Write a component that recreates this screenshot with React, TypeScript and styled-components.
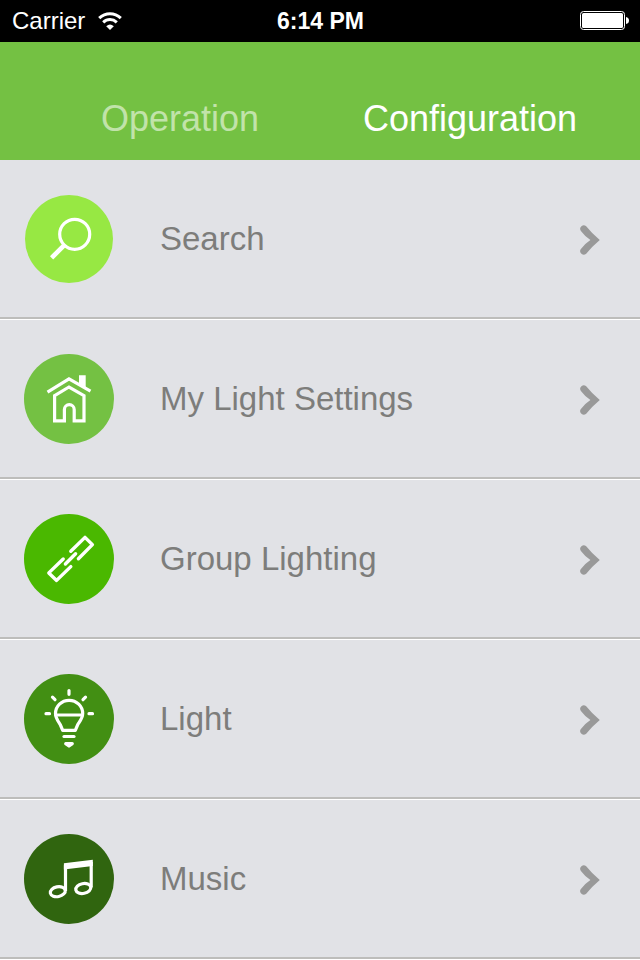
import React from "react";
import styled, { createGlobalStyle } from "styled-components";

const GlobalStyle = createGlobalStyle`
  * { box-sizing: border-box; }
  body {
    margin: 0;
    background: #e1e2e6;
    font-family: "Liberation Sans", Arial, Helvetica, sans-serif;
  }
`;

const StatusBar = styled.header`
  display: grid;
  grid-template-columns: 1fr auto 1fr;
  align-items: center;
  height: 42px;
  padding: 0 11px 1px 12px;
  background: #000;
  color: #fff;
  font-size: 24px;
  line-height: 28px;
`;

const Carrier = styled.div`
  display: flex;
  align-items: center;
  gap: 13px;
`;

const Clock = styled.time`
  font-size: 23px;
  font-weight: bold;
`;

const BatteryIcon = styled.svg`
  justify-self: end;
`;

const TabBar = styled.nav`
  display: grid;
  grid-template-columns: 1fr 1fr;
  height: 118px;
  padding: 35px 25px 0 35px;
  background: #74c143;
`;

const Tab = styled.button<{ $active?: boolean }>`
  padding: 0;
  border: 0;
  background: none;
  color: ${(p) => (p.$active ? "#fff" : "#c1e3aa")};
  font-family: inherit;
  font-size: 36px;
  line-height: 40px;
  cursor: pointer;
`;

const Menu = styled.ul`
  margin: 0;
  padding: 0;
  list-style: none;
`;

const MenuItem = styled.li`
  border-bottom: 1px solid #fff;
`;

const MenuLink = styled.a`
  display: flex;
  align-items: center;
  height: 159px;
  padding: 0 40px 0 24px;
  border-bottom: 2px solid #bdbdbb;
  color: #7d7d7b;
  font-size: 33px;
  line-height: 40px;
  text-decoration: none;
`;

const Badge = styled.svg`
  flex: none;
  width: 90px;
  height: 90px;
  fill: none;
  stroke: #fff;
  stroke-width: 3.2;
`;

const Label = styled.span`
  flex: 1;
  margin-left: 46px;
`;

const Chevron = styled.svg`
  flex: none;
  margin-top: 2px;
`;

const items = [
  {
    label: "Search",
    color: "#97e843",
    radius: 44,
    icon: (
      <>
        <circle cx="50.7" cy="40.3" r="15" />
        <path d="M40.8 50.7 L27.6 63.8" strokeWidth="4.6" />
      </>
    ),
  },
  {
    label: "My Light Settings",
    color: "#74c143",
    radius: 45,
    icon: (
      <>
        <path d="M23.5 38.2 L45 24.8 L66.5 37.2" />
        <path d="M55 21.3 H61.7 V34.5 L55 30.8 Z" fill="#fff" stroke="none" />
        <path d="M30.6 66.8 V41.7 L45 33 L60 41.7 V66.8 H50.2 V55.5 a4.9 4.9 0 0 0 -9.8 0 V66.8 Z" />
      </>
    ),
  },
  {
    label: "Group Lighting",
    color: "#4ab800",
    radius: 45,
    icon: (
      <g strokeLinecap="round" strokeLinejoin="round" strokeWidth="3.4">
        <path d="M46.8 37.2 L61 23.4 L68.4 30.6 L54.4 44.8" />
        <path d="M39.2 45 L24.8 58.9 L32.6 66.4 L46.8 52.6" />
        <path d="M41.4 50 L51.6 39.8" />
      </g>
    ),
  },
  {
    label: "Light",
    color: "#428f13",
    radius: 45,
    icon: (
      <g strokeLinecap="round" strokeLinejoin="round">
        <path d="M38.7 56.3 L36.2 50.5 C34 47 31.5 44 31.5 39.5 A13.6 13.2 0 0 1 58.7 39.5 C58.7 44 56 47 53.8 50.5 L51.3 56.3 Z" />
        <path d="M32 41 H58" />
        <path d="M40 62.5 H50" />
        <path d="M41.7 69.6 H48.3 L45 72 Z" />
        <path d="M45 16.5 V20.3 M22 39.7 H25.5 M65 39.7 H68.5 M28.5 23.2 L31 25.7 M61.5 23.2 L59 25.7" />
      </g>
    ),
  },
  {
    label: "Music",
    color: "#30650f",
    radius: 45,
    icon: (
      <>
        <ellipse cx="33.8" cy="57.7" rx="7.6" ry="4.9" transform="rotate(-12 33.8 57.7)" />
        <ellipse cx="59.3" cy="54.5" rx="7.6" ry="4.9" transform="rotate(-12 59.3 54.5)" />
        <path d="M41.5 31 V57 M67.2 28 V53.5" />
        <path d="M39.9 29.3 L68.8 25.8 V32 L39.9 35.4 Z" fill="#fff" stroke="none" />
      </>
    ),
  },
];

export default function App() {
  return (
    <>
      <GlobalStyle />
      <StatusBar>
        <Carrier>
          <span>Carrier</span>
          <svg width="24" height="18" viewBox="0 0 24 18" fill="none" stroke="#fff" strokeWidth="3" aria-label="Wi-Fi">
            <path d="M1.2 6.2 C7.5 0.1 16.5 0.1 22.8 6.2" />
            <path d="M5.2 10.4 C9.2 6.6 14.8 6.6 18.8 10.4" />
            <path d="M12 18 L8.2 14.2 Q12 10.7 15.8 14.2 Z" fill="#fff" stroke="none" />
          </svg>
        </Carrier>
        <Clock>6:14 PM</Clock>
        <BatteryIcon width="49" height="19" viewBox="0 0 49 19" aria-label="Battery full">
          <rect x="0.5" y="0.5" width="44" height="18" rx="3" fill="none" stroke="#fff" />
          <rect x="2" y="2" width="41" height="15" rx="1.5" fill="#fff" />
          <path d="M46 6 Q49 6.5 49 9.5 Q49 12.5 46 13 Z" fill="#fff" />
        </BatteryIcon>
      </StatusBar>
      <TabBar>
        <Tab type="button">Operation</Tab>
        <Tab type="button" $active aria-current="page">Configuration</Tab>
      </TabBar>
      <Menu>
        {items.map((item) => (
          <MenuItem key={item.label}>
            <MenuLink href="#">
              <Badge viewBox="0 0 90 90" aria-hidden="true">
                <circle cx="45" cy="45" r={item.radius} fill={item.color} stroke="none" />
                {item.icon}
              </Badge>
              <Label>{item.label}</Label>
              <Chevron width="20" height="30" viewBox="0 0 20 30" aria-hidden="true">
                <path
                  d="M6.2 1.2 Q12 8.5 19.8 15 Q12 21.5 6.2 28.8 A3.6 3.6 0 0 1 0.9 24 Q5 18.5 10.4 15 Q5 11.5 0.9 6 A3.6 3.6 0 0 1 6.2 1.2 Z"
                  fill="#999"
                />
              </Chevron>
            </MenuLink>
          </MenuItem>
        ))}
      </Menu>
    </>
  );
}
